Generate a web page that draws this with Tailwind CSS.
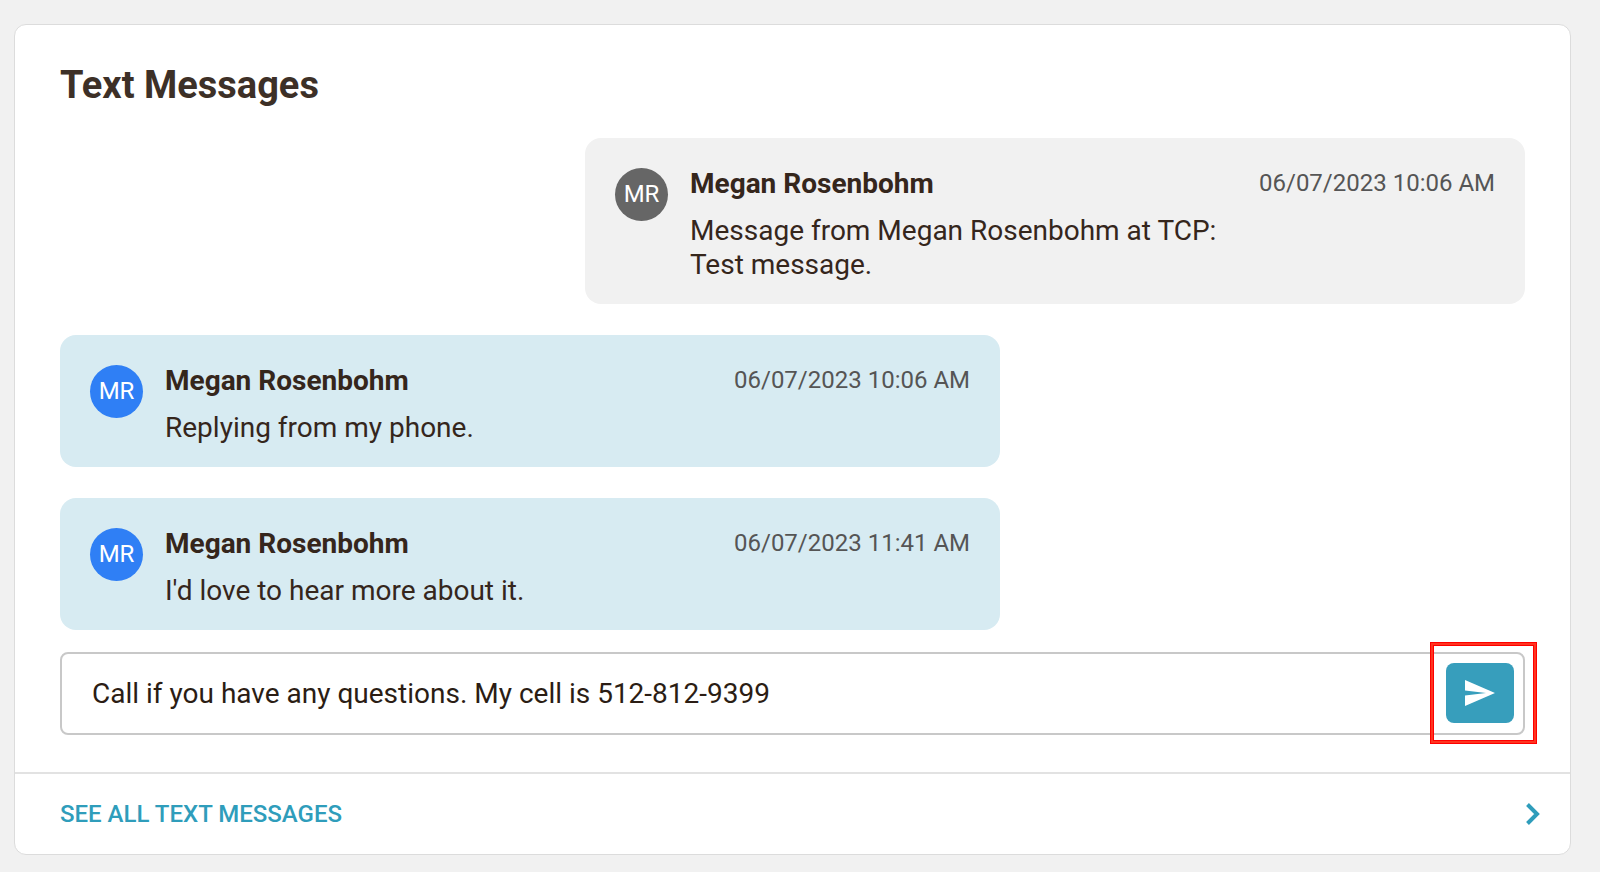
<!DOCTYPE html>
<html lang="en">
<head>
  <meta charset="UTF-8" />
  <meta name="viewport" content="width=device-width, initial-scale=1.0"/>
  <title>Text Messages</title>

  <!-- Tailwind CSS CDN -->
  <script src="https://cdn.jsdelivr.net/npm/@tailwindcss/browser@4"></script>

  <style>
    body {
      font-family: Roboto, 'Liberation Sans', sans-serif;
    }
  </style>
</head>

<body class="min-h-screen bg-[#f1f1f1] pt-6 pr-[29px] pb-4 pl-3.5 text-[#35261c]">

  <!-- Messages card -->
  <main class="rounded-xl border border-[#dcdcdc] bg-white">
    <section class="px-[45px] pt-9 pb-[37px]">
      <h1 class="text-[38px] leading-12 font-bold text-[#3d3027]">Text Messages</h1>

      <!-- Conversation -->
      <div class="mt-[29px] flex flex-col gap-[31px]">
        <article class="flex w-[940px] max-w-full gap-[22px] self-end rounded-2xl bg-[#f1f1f1] px-[30px] pt-[30px] pb-[22px]">
          <div class="flex size-[53px] shrink-0 items-center justify-center rounded-full bg-[#666666] pb-0.5 text-2xl text-white">MR</div>
          <div class="flex-1">
            <header class="flex items-start justify-between">
              <h2 class="text-[28px] leading-8 font-bold">Megan Rosenbohm</h2>
              <time class="text-2xl leading-[30px] text-[#555555]">06/07/2023 10:06 AM</time>
            </header>
            <p class="mt-3.5 text-[28px] leading-[34px]">Message from Megan Rosenbohm at TCP:<br />Test message.</p>
          </div>
        </article>

        <article class="flex w-[940px] max-w-full gap-[22px] rounded-2xl bg-[#d7ebf2] px-[30px] pt-[30px] pb-[22px]">
          <div class="flex size-[53px] shrink-0 items-center justify-center rounded-full bg-[#2f7ff5] pb-0.5 text-2xl text-white">MR</div>
          <div class="flex-1">
            <header class="flex items-start justify-between">
              <h2 class="text-[28px] leading-8 font-bold">Megan Rosenbohm</h2>
              <time class="text-2xl leading-[30px] text-[#555555]">06/07/2023 10:06 AM</time>
            </header>
            <p class="mt-3.5 text-[28px] leading-[34px]">Replying from my phone.</p>
          </div>
        </article>

        <article class="flex w-[940px] max-w-full gap-[22px] rounded-2xl bg-[#d7ebf2] px-[30px] pt-[30px] pb-[22px]">
          <div class="flex size-[53px] shrink-0 items-center justify-center rounded-full bg-[#2f7ff5] pb-0.5 text-2xl text-white">MR</div>
          <div class="flex-1">
            <header class="flex items-start justify-between">
              <h2 class="text-[28px] leading-8 font-bold">Megan Rosenbohm</h2>
              <time class="text-2xl leading-[30px] text-[#555555]">06/07/2023 11:41 AM</time>
            </header>
            <p class="mt-3.5 text-[28px] leading-[34px]">I'd love to hear more about it.</p>
          </div>
        </article>
      </div>

      <!-- Reply box -->
      <form class="mt-[22px] flex items-center rounded-lg border-2 border-[#c8c8c8] pt-[9px] pr-[9px] pb-2.5 pl-[30px]" onsubmit="return false">
        <input type="text" aria-label="Message" value="Call if you have any questions. My cell is 512-812-9399" class="h-[60px] min-w-0 flex-1 text-[28px] text-[#2b1d14] outline-none" />
        <div class="relative">
          <button type="submit" aria-label="Send" class="flex h-[60px] w-[68px] items-center justify-center rounded-lg bg-[#379ebc]">
            <svg class="h-[26px] w-[30px]" viewBox="0 0 30 26" fill="#fff">
              <path d="M0 0L30 13L0 26V15.5L21 13L0 10.5Z"/>
            </svg>
          </button>
          <!-- Highlight frame -->
          <span class="pointer-events-none absolute -top-5 -right-[22px] -bottom-5 -left-[15px] border-2 border-[#ff3520] ring-1 ring-[#ff0000] inset-ring inset-ring-[#ff0000]"></span>
        </div>
      </form>
    </section>

    <!-- Footer link -->
    <a href="#" class="flex items-center justify-between border-t-2 border-[#e2e2e2] pt-5 pr-[30px] pb-5 pl-[45px] text-2xl leading-10 font-medium text-[#2f9dbb]">
      SEE ALL TEXT MESSAGES
      <svg class="h-[22px] w-3.5" viewBox="0 0 14 22" fill="none" stroke="currentColor" stroke-width="4">
        <path d="M1.5 1.5L11 11L1.5 20.5"/>
      </svg>
    </a>
  </main>

</body>
</html>
